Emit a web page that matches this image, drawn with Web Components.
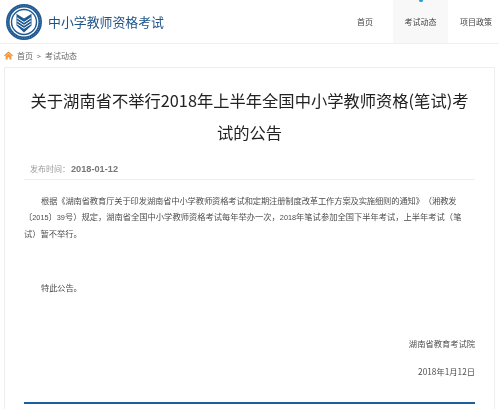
<!DOCTYPE html>
<html lang="zh">
<head>
<meta charset="utf-8">
<title>中小学教师资格考试</title>
<style>
html, body{ margin:0; height:409px; overflow:hidden; background:#fff; }
body{ font-family:"Noto Sans CJK SC", sans-serif; filter:blur(.3px); }
notice-card .n{ font-family:"Liberation Sans", sans-serif; font-size:7.3px; line-height:0; }
notice-card .line{ display:block; white-space:nowrap; }
notice-card .line.first{ padding-left:17px; letter-spacing:-.12px; }
</style>
</head>
<body>
<site-header></site-header>
<bread-crumb></bread-crumb>
<notice-card>
    <span slot="title">关于湖南省不举行2018年上半年全国中小学教师资格(笔试)考试的公告</span>
    <span slot="date">2018-01-12</span>
    <p>
        <span class="line first">根据《湖南省教育厅关于印发湖南省中小学教师资格考试和定期注册制度改革工作方案及实施细则的通知》（湘教发</span>
        <span class="line">〔<span class="n">2015</span>〕<span class="n">39</span>号）规定，湖南省全国中小学教师资格考试每年举办一次，<span class="n">2018</span>年笔试参加全国下半年考试，上半年考试（笔</span>
        <span class="line">试）暂不举行。</span>
    </p>
    <p class="gap"><span class="line first">特此公告。</span></p>
    <span slot="org">湖南省教育考试院</span>
    <span slot="day">2018年1月12日</span>
</notice-card>

<script>
class SiteHeader extends HTMLElement{

    constructor(){
        super();
        this.shadow = this.attachShadow({mode:'open'});
    }

    connectedCallback(){
        this.shadow.innerHTML = `
        <style>
        :host{
            display:flex;
            align-items:stretch;
            height:43px;
            border-bottom:1px solid #f0f0f0;
            box-sizing:content-box;
        }
        .brand{
            display:flex;
            align-items:center;
            gap:6px;
            padding-left:6px;
            flex:1;
        }
        .brand svg{ display:block; }
        .name{
            font-size:12.9px;
            color:#1f5387;
            white-space:nowrap;
        }
        nav{ display:flex; }
        a{
            display:flex;
            align-items:center;
            justify-content:center;
            font-size:8px;
            color:#444;
            text-decoration:none;
            white-space:nowrap;
        }
        .home{ width:56px; }
        .active{ width:55px; background:#f8f8f8; position:relative; }
        .active::before{
            content:"";
            position:absolute;
            left:26px;
            top:-1px;
            width:4px;
            height:3px;
            border-radius:50%;
            background:#2a9fd6;
        }
        .last{ width:51px; justify-content:flex-start; padding-left:12px; box-sizing:border-box; overflow:hidden; }
        </style>
        <div class="brand">
            <svg width="36" height="36" viewBox="0 0 36 36">
                <circle cx="18" cy="18" r="18" fill="#1f5a92"/>
                <circle cx="18" cy="18" r="16.2" fill="none" stroke="#8fb0cf" stroke-width=".6" stroke-dasharray="1 1.4"/>
                <circle cx="18" cy="18" r="14.4" fill="#fff"/>
                <circle cx="18" cy="18" r="13.2" fill="#1f5a92"/>
                <circle cx="18" cy="18" r="11.8" fill="#fff"/>
                <path d="M18 14.5 L10.5 9.8 V21.5 L18 28.5 L25.5 21.5 V9.8 Z" fill="#1f5a92"/>
                <path d="M11 13.8 L18 18.4 L25 13.8 M11 16.8 L18 21.4 L25 16.8 M11 19.8 L18 24.4 L25 19.8" fill="none" stroke="#fff" stroke-width="1"/>
            </svg>
            <span class="name">中小学教师资格考试</span>
        </div>
        <nav>
            <a class="home" href="#">首页</a>
            <a class="active" href="#">考试动态</a>
            <a class="last" href="#">项目政策</a>
        </nav>
        `;
    }
}

class BreadCrumb extends HTMLElement{

    constructor(){
        super();
        this.shadow = this.attachShadow({mode:'open'});
    }

    connectedCallback(){
        this.shadow.innerHTML = `
        <style>
        :host{
            display:flex;
            align-items:center;
            gap:3px;
            height:23px;
            padding-left:4px;
            font-size:8px;
            color:#666;
        }
        svg{ display:block; margin-right:1px; }
        .sep{ font-size:7px; padding:0 1px; }
        </style>
        <svg width="9" height="9" viewBox="0 0 9 9">
            <path d="M4.5 .5 L9 4.6 L8.2 5.2 L4.5 2 L.8 5.2 L0 4.6 Z" fill="#e8862a"/>
            <path d="M1.6 5 L4.5 2.6 L7.4 5 V8.6 H5.3 V6.2 H3.7 V8.6 H1.6 Z" fill="#ee9a3c"/>
        </svg>
        <span>首页</span>
        <span class="sep">&gt;</span>
        <span>考试动态</span>
        `;
    }
}

class NoticeCard extends HTMLElement{

    constructor(){
        super();
        this.shadow = this.attachShadow({mode:'open'});
    }

    connectedCallback(){
        this.shadow.innerHTML = `
        <style>
        :host{
            display:block;
            margin:0 4px;
            height:343px;
            box-sizing:border-box;
            border:1px solid #eeeeee;
            border-bottom:none;
            padding:0 19px;
            overflow:hidden;
        }
        h1{
            margin:0;
            padding:16px 5px 0;
            font-size:16.3px;
            font-weight:400;
            line-height:32px;
            color:#222;
            text-align:center;
        }
        .meta{
            margin-top:14px;
            padding-left:6px;
            height:17px;
            line-height:14px;
            font-size:8px;
            color:#999;
            border-bottom:1px solid #eeeeee;
        }
        .meta b{
            font-family:"Liberation Sans", sans-serif;
            font-size:9.2px;
            color:#777;
            margin-left:1px;
        }
        .body{
            padding:11.5px 5px 0 0;
            font-size:8.28px;
            line-height:16.5px;
            color:#4d4d4d;
            text-spacing-trim:space-all;
        }
        ::slotted(p){
            margin:0;
        }
        ::slotted(p.gap){
            margin-top:38px;
        }
        .sign{
            margin-top:39.5px;
            text-align:right;
            font-size:8.28px;
            color:#4d4d4d;
            line-height:16px;
        }
        .sign div + div{ margin-top:12px; }
        .rule{
            margin-top:23px;
            height:2px;
            background:#1b5f9e;
        }
        </style>
        <h1><slot name="title"></slot></h1>
        <div class="meta">发布时间：<b><slot name="date"></slot></b></div>
        <div class="body"><slot></slot></div>
        <div class="sign">
            <div><slot name="org"></slot></div>
            <div><slot name="day"></slot></div>
        </div>
        <div class="rule"></div>
        `;
    }
}

customElements.define('site-header', SiteHeader);
customElements.define('bread-crumb', BreadCrumb);
customElements.define('notice-card', NoticeCard);
</script>
</body>
</html>
